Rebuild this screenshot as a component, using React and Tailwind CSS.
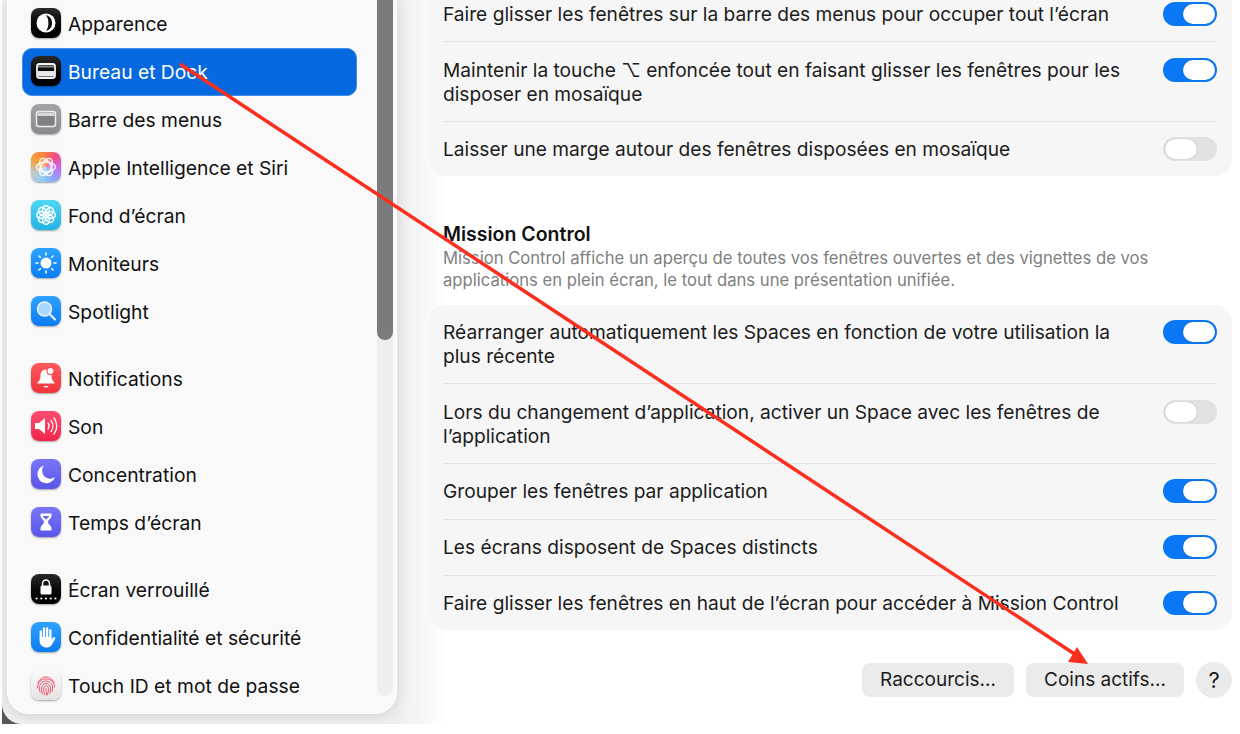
const FONT = "font-['Inter','Noto_Sans',sans-serif]";

function Tile({ className = "", children }) {
  return (
    <span className={`-mt-[2px] flex size-[30px] shrink-0 items-center justify-center rounded-[8px] shadow-[0_1px_2px_rgba(0,0,0,0.35)] ${className}`}>
      <svg viewBox="0 0 30 30" className="size-[30px]">{children}</svg>
    </span>
  );
}

const ICONS = {
  appearance: (
    <Tile className="bg-gradient-to-b from-[#2a2a2a] to-black">
      <circle cx="15" cy="15" r="9.500" fill="#fff" />
      <path d="M15 7c5 1.500 6 5 6 8s-1 6.500-6 8c1.800-2.500 2.400-5 2.400-8S16.800 9.500 15 7z" fill="#0c0c0c" />
    </Tile>
  ),
  desktop: (
    <Tile className="bg-gradient-to-b from-[#2a2a2a] to-black">
      <rect x="6" y="8" width="18" height="14" rx="2.500" fill="none" stroke="#f2f2f2" strokeWidth="1.800" />
      <rect x="7" y="15" width="16" height="5.500" fill="#e8e8e8" />
      <rect x="7" y="9.500" width="16" height="2" fill="#8a8a8a" />
    </Tile>
  ),
  menubar: (
    <Tile className="bg-gradient-to-b from-[#a3a3a8] to-[#88888e]">
      <rect x="5.500" y="7.500" width="19" height="15" rx="2.500" fill="#808086" stroke="#eee" strokeWidth="1.500" />
      <rect x="6.500" y="8.500" width="17" height="3.500" fill="#d8d8dc" />
    </Tile>
  ),
  siri: (
    <Tile className="bg-[conic-gradient(from_300deg,#f6a13c,#f9803c,#f04a8a,#c66cf0,#8fa4f5,#8fd0f5,#c8c8c0,#f6a13c)]">
      <circle cx="15" cy="15" r="8" fill="#fff" opacity="0.25" />
      <g fill="none" stroke="#fff" strokeWidth="1.300" opacity="0.95">
        <ellipse cx="15" cy="15" rx="9.500" ry="5" />
        <ellipse cx="15" cy="15" rx="9.500" ry="5" transform="rotate(60 15 15)" />
        <ellipse cx="15" cy="15" rx="9.500" ry="5" transform="rotate(120 15 15)" />
      </g>
    </Tile>
  ),
  wallpaper: (
    <Tile className="bg-gradient-to-b from-[#4fd6f5] to-[#1fb4e6]">
      <g fill="none" stroke="#fff" strokeWidth="1.500">
        {[0, 45, 90, 135, 180, 225, 270, 315].map((a) => (
          <circle key={a} cx="15" cy="9.300" r="3.500" transform={`rotate(${a} 15 15)`} />
        ))}
      </g>
      <circle cx="15" cy="15" r="1.500" fill="#fff" />
    </Tile>
  ),
  displays: (
    <Tile className="bg-gradient-to-b from-[#2ea2ff] to-[#0a7cf5]">
      <circle cx="15" cy="15" r="5.500" fill="#fff" />
      <g stroke="#fff" strokeWidth="1.500" strokeLinecap="round">
        {[0, 45, 90, 135, 180, 225, 270, 315].map((a) => (
          <line key={a} x1="15" y1="5" x2="15" y2="7" transform={`rotate(${a} 15 15)`} />
        ))}
      </g>
    </Tile>
  ),
  spotlight: (
    <Tile className="bg-gradient-to-b from-[#2ea2ff] to-[#0a7cf5]">
      <circle cx="13.500" cy="13" r="7" fill="#a9d8ff" stroke="#e8f4ff" strokeWidth="1.500" />
      <line x1="18.800" y1="18.300" x2="24" y2="23.500" stroke="#e8f4ff" strokeWidth="2.200" strokeLinecap="round" />
    </Tile>
  ),
  notifications: (
    <Tile className="bg-gradient-to-b from-[#ff5a5f] to-[#f0303a]">
      <path d="M15 6.500c-3.600 0-5.500 2.800-5.500 6.200 0 3.500-1 5-3 6.800v1h17v-1c-2-1.800-3-3.300-3-6.800 0-3.400-1.900-6.200-5.500-6.200z" fill="#fff" />
      <path d="M12.500 23a2.500 1.600 0 0 0 5 0z" fill="#fff" />
      <circle cx="19.500" cy="8" r="4" fill="#f64a50" />
      <circle cx="19.500" cy="8" r="2.900" fill="#fff" />
    </Tile>
  ),
  sound: (
    <Tile className="bg-gradient-to-b from-[#ff4b6e] to-[#f0244c]">
      <path d="M4 12h4l6-5v16l-6-5H4z" fill="#fff" />
      <g fill="none" stroke="#fff" strokeWidth="1.300" strokeLinecap="round">
        <path d="M17 12a5 5 0 0 1 0 6" />
        <path d="M20 9.500a9 9 0 0 1 0 11" />
        <path d="M23 7a13 13 0 0 1 0 16" />
      </g>
    </Tile>
  ),
  focus: (
    <Tile className="bg-gradient-to-b from-[#7a76f8] to-[#5a54e8]">
      <path d="M13 6.500a9 9 0 1 0 11 11.500 8 8 0 0 1-11-11.500z" fill="#fff" />
    </Tile>
  ),
  screentime: (
    <Tile className="bg-gradient-to-b from-[#7a76f8] to-[#5a54e8]">
      <path d="M9.500 6.500h11v2c0 3-3.500 4.500-3.500 6.500s3.500 3.500 3.500 6.500v2h-11v-2c0-3 3.500-4.500 3.500-6.500s-3.500-3.500-3.500-6.500z" fill="#fff" />
      <path d="M11.800 9h6.400c-.5 1.500-2.300 2.500-3.200 3.700-.9-1.200-2.700-2.200-3.200-3.700z" fill="#6a66f0" />
    </Tile>
  ),
  lock: (
    <Tile className="bg-gradient-to-b from-[#2a2a2a] to-black">
      <path d="M11.500 12V9.500a3.500 3.500 0 0 1 7 0V12" fill="none" stroke="#fff" strokeWidth="1.500" />
      <rect x="9.500" y="11.500" width="11" height="9" rx="1.500" fill="#fff" />
      {[6.500, 11.200, 15.900, 20.600, 25.300].map((x) => (
        <circle key={x} cx={x - 0.9} cy="24.500" r="1.100" fill="#fff" />
      ))}
    </Tile>
  ),
  privacy: (
    <Tile className="bg-gradient-to-b from-[#2ea2ff] to-[#0a7cf5]">
      <g stroke="#fff" strokeWidth="2.300" strokeLinecap="round">
        <line x1="9.800" y1="17" x2="9.800" y2="9.500" />
        <line x1="13" y1="15" x2="13" y2="6.500" />
        <line x1="16.200" y1="15" x2="16.200" y2="6.500" />
        <line x1="19.400" y1="16" x2="19.400" y2="8.500" />
      </g>
      <path d="M8.700 15h11.900v2.800l1.600-2.300a1.200 1.200 0 0 1 2 1.300l-3.500 6.200c-1 1.600-2.600 2.500-4.900 2.500-4.100 0-7.100-2.500-7.100-6.500z" fill="#fff" />
    </Tile>
  ),
  touchid: (
    <Tile className="bg-gradient-to-b from-[#fafafa] to-[#e4e4e4]">
      <g fill="none" stroke="#f0506e" strokeWidth="1" strokeLinecap="round">
        <path d="M7 13c1.500-4 4.500-6 8-6s6.500 2 8 6" />
        <path d="M6.500 18c0-6 3.500-9 8.500-9s8.500 3 8.500 8" />
        <path d="M9 22c-.8-2-.8-4-.5-5.500.6-3 3.300-5.500 6.500-5.500s6 2.500 6.500 6c.2 1.500 0 3-.3 4.500" />
        <path d="M11.500 24c-1-2-1.300-4-1-6 .4-2.500 2.300-4.500 4.500-4.500s4 1.800 4.500 4.200c.3 1.800 0 3.800-.5 5.500" />
        <path d="M14 25c-1-2.200-1.600-4.500-1.300-6.500.2-1.400 1.100-2.600 2.300-2.600s2.200 1.100 2.400 2.700c.2 1.800-.2 3.900-.9 5.900" />
        <path d="M15 18.500c0 2.300.3 4.500 1 6.500" />
      </g>
    </Tile>
  ),
};

const GROUPS = [
  [
    { icon: "appearance", label: "Apparence" },
    { icon: "desktop", label: "Bureau et Dock", active: true },
    { icon: "menubar", label: "Barre des menus" },
    { icon: "siri", label: "Apple Intelligence et Siri" },
    { icon: "wallpaper", label: "Fond d’écran" },
    { icon: "displays", label: "Moniteurs" },
    { icon: "spotlight", label: "Spotlight" },
  ],
  [
    { icon: "notifications", label: "Notifications" },
    { icon: "sound", label: "Son" },
    { icon: "focus", label: "Concentration" },
    { icon: "screentime", label: "Temps d’écran" },
  ],
  [
    { icon: "lock", label: "Écran verrouillé" },
    { icon: "privacy", label: "Confidentialité et sécurité" },
    { icon: "touchid", label: "Touch ID et mot de passe" },
  ],
];

const TILING = [
  { text: "Faire glisser les fenêtres sur la barre des menus pour occuper tout l’écran", on: true },
  { text: "Maintenir la touche ⌥ enfoncée tout en faisant glisser les fenêtres pour les disposer en mosaïque", on: true },
  { text: "Laisser une marge autour des fenêtres disposées en mosaïque", on: false },
];

const MISSION = [
  { text: "Réarranger automatiquement les Spaces en fonction de votre utilisation la plus récente", on: true },
  { text: "Lors du changement d’application, activer un Space avec les fenêtres de l’application", on: false },
  { text: "Grouper les fenêtres par application", on: true },
  { text: "Les écrans disposent de Spaces distincts", on: true },
  { text: "Faire glisser les fenêtres en haut de l’écran pour accéder à Mission Control", on: true },
];

function Toggle({ on }) {
  return (
    <span
      className={`flex h-6 w-[54px] shrink-0 items-center rounded-full px-[2px] ${
        on ? "justify-end bg-[#0a78f5]" : "justify-start bg-[#e2e2e2]"
      }`}
    >
      <span className="h-5 w-[32px] rounded-full bg-white shadow-[0_0_1px_rgba(0,0,0,0.4)]" />
    </span>
  );
}

function SettingsCard({ rows, className = "" }) {
  return (
    <div className={`rounded-[16px] bg-[#f6f6f6] pr-[15px] pl-[14px] ${className}`}>
      {rows.map((row, i) => (
        <div
          key={row.text}
          className={`flex items-start justify-between gap-10 first:pb-[15px] last:pb-[15px] ${
            i === 1 ? "pt-[16px] pb-[15px]" : "pt-[15px] pb-[16px]"
          } ${i > 0 ? "border-t border-[#e4e4e4]" : ""}`}
        >
          <p className="text-[19.150px] leading-[24px] text-[#1c1c1c]">{row.text}</p>
          <Toggle on={row.on} />
        </div>
      ))}
    </div>
  );
}

function Sidebar() {
  return (
    <aside className="flex h-[714px] w-[390px] shrink-0 rounded-b-[22px] border border-t-0 border-white bg-[#f9f9f9] pr-[3px] shadow-[0_2px_14px_rgba(0,0,0,0.12)]">
      <nav className="flex-1 pr-[20px] pl-[14px]">
        {GROUPS.map((group, g) => (
          <div key={g} className={g > 0 ? "mt-[19px]" : ""}>
            {group.map((item) => (
              <div
                key={item.label}
                className={`flex h-[48px] items-center gap-[7px] rounded-[10px] border pl-[8px] ${
                  item.active ? "border-[#3d8cf0] bg-[#0669e0] text-white" : "border-transparent text-[#111]"
                }`}
              >
                {ICONS[item.icon]}
                <span className="text-[19.250px] leading-6">{item.label}</span>
              </div>
            ))}
          </div>
        ))}
      </nav>
      <div className="h-[696px] w-4 rounded-b-full bg-[#eeeeee]">
        <div className="h-[340px] rounded-b-full bg-[#7b7b7b]" />
      </div>
    </aside>
  );
}

function Content() {
  return (
    <main className="min-w-0 flex-1 pr-[8px] pl-[32px]">
      <SettingsCard rows={TILING} className="-mt-[13px]" />
      <h2 className="mt-[46px] pl-[14px] text-[19.500px] leading-6 font-semibold text-[#111]">Mission Control</h2>
      <p className="mt-[1px] pr-[60px] pl-[14px] text-[16.650px] leading-[22px] text-[#808080]">
        Mission Control affiche un aperçu de toutes vos fenêtres ouvertes et des vignettes de vos applications en plein écran, le tout dans une présentation unifiée.
      </p>
      <SettingsCard rows={MISSION} className="mt-[14px]" />
      <div className="mt-[32px] flex items-center justify-end gap-3">
        <button type="button" className="h-[34px] w-[152px] rounded-[8px] bg-[#ebebeb] text-[19px] text-[#1c1c1c]">
          Raccourcis…
        </button>
        <button type="button" className="h-[34px] w-[158px] rounded-[8px] bg-[#ebebeb] text-[19px] text-[#1c1c1c]">
          Coins actifs…
        </button>
        <button type="button" className="size-9 rounded-full bg-[#ebebeb] text-[22px] text-[#1c1c1c]">
          ?
        </button>
      </div>
    </main>
  );
}

export default function App() {
  return (
    <div className={`relative h-[734px] w-[1240px] overflow-hidden bg-white ${FONT}`}>
      <div className="ml-[2px] h-[724px] bg-[#56565c]">
        <div className="flex h-full rounded-bl-[20px] bg-gradient-to-r from-[#efefef] from-[32%] to-white to-[36%] pl-[5px]">
          <Sidebar />
          <Content />
        </div>
      </div>
      {/* annotation arrow drawn over the screenshot */}
      <svg viewBox="0 0 1240 734" className="pointer-events-none absolute inset-0 size-full">
        <line x1="180" y1="64" x2="1076" y2="655" stroke="#fb2f1f" strokeWidth="3.500" />
        <polygon points="1088,664 1068,662 1077,647" fill="#fb2f1f" />
      </svg>
    </div>
  );
}
